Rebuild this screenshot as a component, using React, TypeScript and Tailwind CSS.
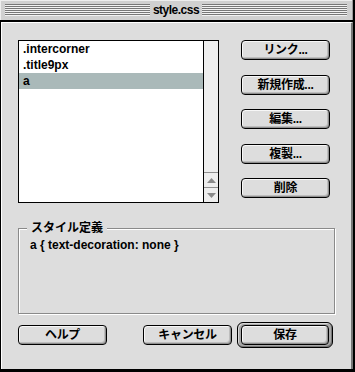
import React from "react";

function Stripes() {
  return (
    <div className="flex-1 flex flex-col">
      {[0, 1, 2, 3, 4, 5].map((i) => (
        <div key={i} className="h-[2px] border-t border-[#777777] bg-[#f2f2f2]" />
      ))}
    </div>
  );
}

function Btn({ label, w = "w-[89px]" }: { label: string; w?: string }) {
  return (
    <div
      className={`${w} h-[20px] rounded-[4px] border border-black bg-[#dddddd] shadow-[inset_1px_1px_0_#f7f7f7,inset_-1px_-1px_0_#8f8f8f,inset_-2px_-2px_0_#bdbdbd] flex items-center justify-center text-[12px] leading-none font-bold`}
    >
      <span className="tracking-[-0.3px]">{label}</span>
    </div>
  );
}

export default function App() {
  const rows = [".intercorner", ".title9px", "a"];
  return (
    <div className="w-[355px] h-[372px] bg-black flex flex-col font-['Liberation_Sans','Noto_Sans_CJK_JP',sans-serif] text-black">
      {/* Title bar */}
      <div className="h-[20px] mr-[2px] bg-[#d0d0d0] border-r border-[#999999] shadow-[inset_1px_1px_0_#eeeeee] flex items-center px-[5px]">
        <Stripes />
        <div className="px-[3px] text-[12px] font-bold leading-none tracking-[-0.5px]">style.css</div>
        <Stripes />
      </div>
      <div className="h-[2px]" />
      {/* Body */}
      <div className="flex-1 ml-px mr-[2px] mb-[3px] bg-[#dddddd] border-l border-t border-white border-r-2 border-r-[#777777] pl-[16px] pt-[17px] flex flex-col">
        {/* Top section */}
        <div className="flex">
          <div className="w-[201px] h-[163px] border border-black bg-white flex">
            <div className="flex-1 pt-0 flex flex-col">
              {rows.map((r, i) => (
                <div
                  key={r}
                  className={`h-[16px] pl-[4px] flex items-center text-[12px] font-bold leading-none ${i === 2 ? "bg-[#aab9b9]" : ""}`}
                >
                  {r}
                </div>
              ))}
            </div>
            <div className="w-[15px] border-l border-black bg-[#eeeeee] flex flex-col justify-end">
              <div className="h-[15px] border-t border-[#8f8f8f] flex items-center justify-center">
                <svg width="9" height="5" viewBox="0 0 9 5">
                  <polygon points="4.5,0 9,5 0,5" fill="#8a8a8a" />
                </svg>
              </div>
              <div className="h-[15px] border-t border-[#8f8f8f] flex items-center justify-center">
                <svg width="9" height="5" viewBox="0 0 9 5">
                  <polygon points="0,0 9,0 4.5,5" fill="#8a8a8a" />
                </svg>
              </div>
            </div>
          </div>
          <div className="ml-[22px] flex flex-col gap-[14.5px]">
            <Btn label="リンク..." />
            <Btn label="新規作成..." />
            <Btn label="編集..." />
            <Btn label="複製..." />
            <Btn label="削除" />
          </div>
        </div>
        {/* Group box */}
        <div className="relative mt-[25px] w-[317px] h-[86px] border border-[#8a8a8a] shadow-[inset_1px_1px_0_#ffffff,1px_1px_0_#ffffff] pl-[11px] pt-[9px]">
          <div className="absolute left-[8px] top-[-8px] px-[4px] bg-[#dddddd] text-[12px] font-bold leading-[14px]">
            スタイル定義
          </div>
          <div className="text-[12px] font-bold leading-[14px]">a {"{"} text-decoration: none {"}"}</div>
        </div>
        {/* Bottom buttons */}
        <div className="mt-[8px] flex items-center">
          <Btn label="ヘルプ" />
          <div className="ml-[36px]">
            <Btn label="キャンセル" />
          </div>
          <div className="ml-[5px] w-[96px] h-[26px] rounded-[6px] border border-black bg-[#a8a8a8] shadow-[inset_1px_1px_0_#d8d8d8,inset_-1px_-1px_0_#777777] p-[2px] flex items-center justify-center">
            <Btn label="保存" w="w-[88px]" />
          </div>
        </div>
      </div>
    </div>
  );
}
